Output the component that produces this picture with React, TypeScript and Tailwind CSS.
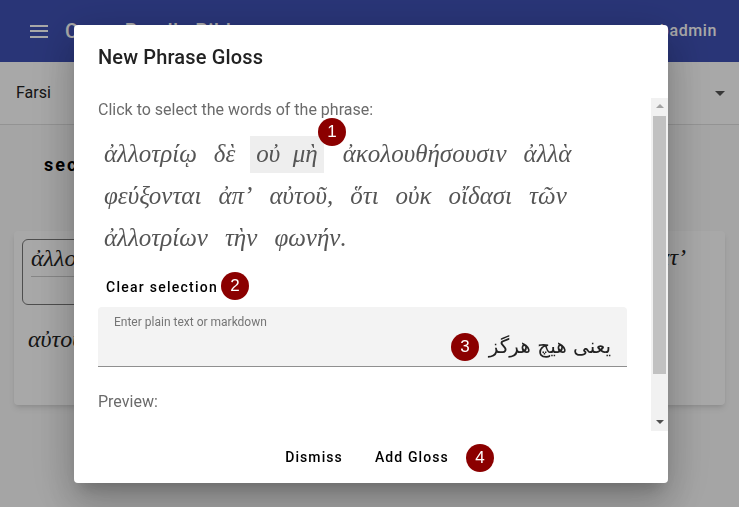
import React from "react";

interface Word {
  text: string;
  selected?: boolean;
  mark?: boolean;
}

const lines: Word[][] = [
  [
    { text: "ἀλλοτρίῳ" },
    { text: "δὲ" },
    { text: "οὐ  μὴ", selected: true },
    { text: "ἀκολουθήσουσιν", mark: true },
    { text: "ἀλλὰ" },
  ],
  [
    { text: "φεύξονται" },
    { text: "ἀπ’" },
    { text: "αὐτοῦ," },
    { text: "ὅτι" },
    { text: "οὐκ" },
    { text: "οἴδασι" },
    { text: "τῶν" },
  ],
  [{ text: "ἀλλοτρίων" }, { text: "τὴν" }, { text: "φωνήν." }],
];

const Badge = ({ n, className }: { n: number; className: string }) => (
  <div
    className={`absolute flex h-[28px] w-[28px] items-center justify-center rounded-full bg-[#8b0000] font-['Liberation_Sans',sans-serif] text-[17px] leading-none text-white ${className}`}
  >
    {n}
  </div>
);

const BackgroundPage = () => (
  <div className="flex h-[507px] w-[739px] flex-col overflow-hidden bg-[#fafafa] font-['Roboto',sans-serif]">
    <header className="flex h-[62px] shrink-0 items-center bg-[#3f51b5] pl-[30px] pr-[22px] text-white shadow-md">
      <div className="flex w-[18px] flex-col gap-[3.5px]">
        <span className="h-[2px] bg-white" />
        <span className="h-[2px] bg-white" />
        <span className="h-[2px] bg-white" />
      </div>
      <h1 className="ml-[17px] text-[20px] font-medium tracking-[0.5px]">Cross Bundle Bible</h1>
      <span className="ml-auto text-[16px] font-medium tracking-[0.6px]">webadmin</span>
    </header>

    <div className="flex h-[63px] shrink-0 items-center justify-between border-b border-[#e0e0e0] bg-white pl-4 pr-[14px]">
      <span className="text-[16px] text-[#222]">Farsi</span>
      <span className="h-0 w-0 border-x-[5px] border-t-[5px] border-x-transparent border-t-[#555]" />
    </div>

    <div className="px-[44px] pt-[26px] text-[18px] font-bold tracking-[2px] text-black">section 1</div>

    <div className="mx-[14px] mt-[53px] flex h-[174px] justify-between rounded bg-white p-2 shadow-md">
      <div className="flex flex-col">
        <div className="flex h-[66px] w-[120px] flex-col rounded-md border border-[#777] px-2">
          <span className="font-['Liberation_Serif',serif] text-[24px] italic leading-[36px] text-[#222]">ἀλλοτρίῳ</span>
          <span className="border-t border-[#ccc] text-center text-[14px] font-bold leading-[20px]">•••</span>
        </div>
        <span className="mt-4 pl-[6px] font-['Liberation_Serif',serif] text-[24px] italic text-[#222]">αὐτοῦ</span>
      </div>
      <span className="pr-[31px] font-['Liberation_Serif',serif] text-[24px] italic text-[#222]">κατ’</span>
    </div>
  </div>
);

const ScrollBar = () => (
  <div className="flex w-[17px] shrink-0 flex-col bg-[#f1f1f1]">
    <div className="flex h-[17px] items-center justify-center">
      <span className="h-0 w-0 border-x-[4px] border-b-[4px] border-x-transparent border-b-[#a3a3a3]" />
    </div>
    <div className="mx-[2px] mt-px h-[258px] bg-[#c1c1c1]" />
    <div className="mt-auto flex h-[17px] items-center justify-center">
      <span className="h-0 w-0 border-x-[4px] border-t-[4px] border-x-transparent border-t-[#505050]" />
    </div>
  </div>
);

const PhraseGlossDialog = () => (
  <div className="relative flex h-[458px] w-[594px] flex-col rounded bg-white font-['Roboto',sans-serif] shadow-[0_11px_15px_-7px_rgba(0,0,0,0.2),0_24px_38px_3px_rgba(0,0,0,0.14),0_9px_46px_8px_rgba(0,0,0,0.12)]">
    <h2 className="h-[73px] shrink-0 px-6 pt-4 text-[20px] font-medium leading-[32px] tracking-[0.15px] text-[#222]">
      New Phrase Gloss
    </h2>

    <div className="flex h-[333px] shrink-0">
      <div className="flex-1 overflow-hidden px-6">
        <p className="text-[16px] leading-[24px] text-[#6b6b6b]">Click to select the words of the phrase:</p>

        <div className="mt-[14px] flex flex-col gap-[5px] font-['Liberation_Serif',serif] text-[25px] italic text-[#555]">
          {lines.map((line, i) => (
            <div key={i} className="flex h-[37px] items-center gap-[5px]">
              {line.map((word, j) => (
                <span
                  key={j}
                  className={`flex h-[37px] items-center whitespace-pre px-[6px] ${
                    word.selected ? "ml-[4px] bg-[#eeeeee]" : ""
                  }`}
                >
                  {word.mark && <span className="mr-[7px] mt-[-7px] h-[11px] w-px self-start bg-[#999]" />}
                  {word.text}
                </span>
              ))}
            </div>
          ))}
        </div>

        <button className="mt-[13px] h-[36px] px-2 text-[14px] font-medium tracking-[1.25px] text-black">
          Clear selection
        </button>

        <div className="mt-px flex h-[60px] flex-col rounded-t border-b border-[#8f8f8f] bg-[#f3f3f3] px-4 pt-[7px]">
          <span className="text-[12px] leading-[16px] text-[#757575]">Enter plain text or markdown</span>
          <span dir="rtl" className="mt-[2px] font-['DejaVu_Sans',sans-serif] text-[20px] leading-[28px] text-[#222]">
            یعنی هیچ هرگز
          </span>
        </div>

        <p className="mt-[23px] text-[16px] leading-[24px] text-[#6b6b6b]">Preview:</p>
        <p className="mt-[8px] pl-[6px] font-['Liberation_Serif',serif] text-[24px] italic leading-[34px] text-[#555]">
          ἀλλοτρίῳ
        </p>
      </div>
      <ScrollBar />
    </div>

    <div className="flex h-[52px] shrink-0 items-center justify-center gap-[16px] pr-[8px] pt-[2px]">
      <button className="h-[36px] px-2 text-[14px] font-medium tracking-[1.1px] text-black">Dismiss</button>
      <button className="h-[36px] px-2 text-[14px] font-medium tracking-[1.1px] text-black">Add Gloss</button>
    </div>

    <Badge n={1} className="left-[244px] top-[93px]" />
    <Badge n={2} className="left-[147px] top-[247px]" />
    <Badge n={3} className="left-[377px] top-[308px]" />
    <Badge n={4} className="left-[392px] top-[419px]" />
  </div>
);

export default function App() {
  return (
    <div className="relative h-[507px] w-[739px] overflow-hidden">
      <BackgroundPage />
      <div className="fixed inset-0 flex items-center justify-center bg-black/[0.34] pl-[3px]">
        <PhraseGlossDialog />
      </div>
    </div>
  );
}
